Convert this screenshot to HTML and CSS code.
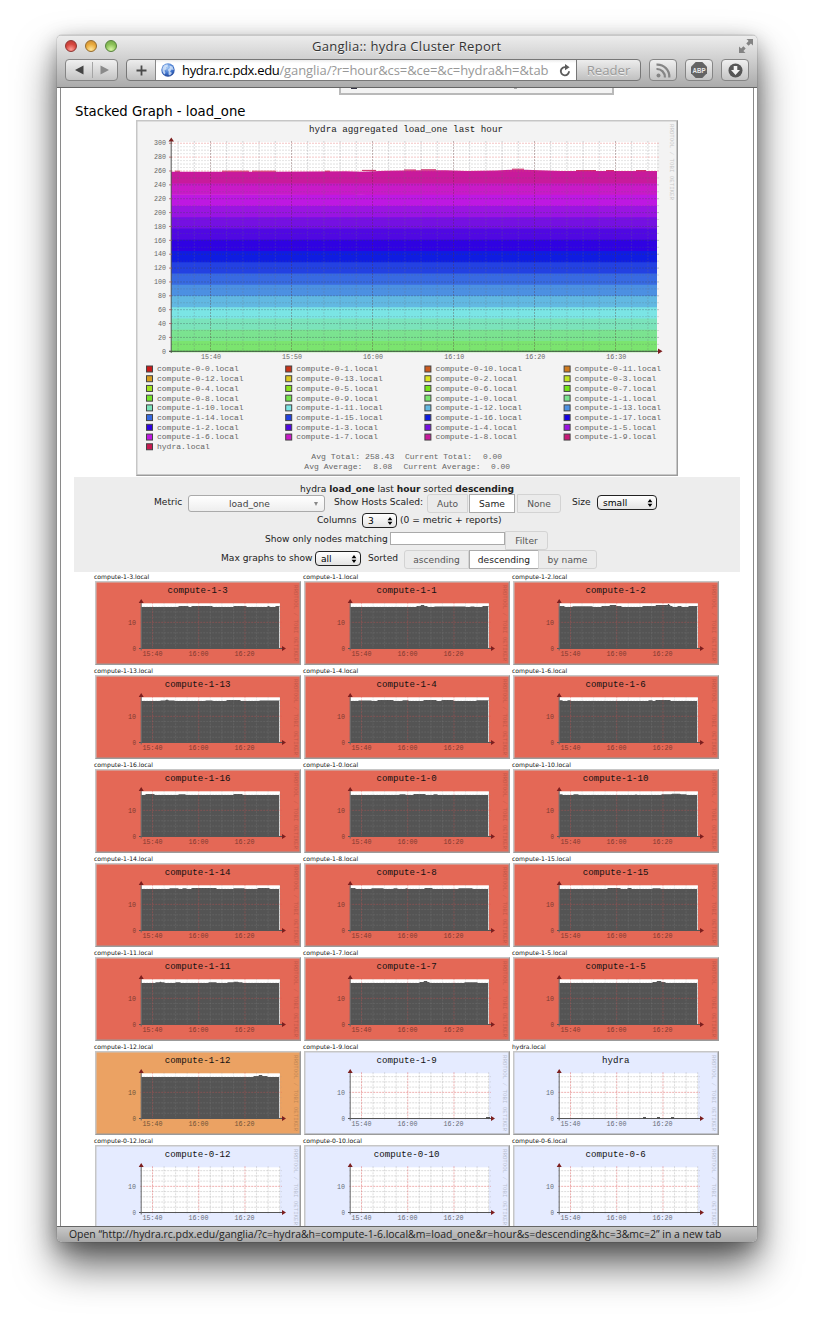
FILE: index.html
```html
<!DOCTYPE html>
<html lang="en">
<head>
<meta charset="utf-8">
<title>Ganglia:: hydra Cluster Report</title>
<link rel="stylesheet" href="styles.css">
</head>
<body>
<div class="window">
  <header class="chrome">
    <div class="titlebar">
      <div class="lights"><i class="light red"></i><i class="light amber"></i><i class="light green"></i></div>
      <div class="title">Ganglia:: hydra Cluster Report</div>
      <svg class="fullscreen" width="14" height="14" viewBox="0 0 14 14"><path d="M7.5 0H14V6.500L11.900 4.400L9.600 6.700L7.300 4.400L9.600 2.100ZM0 7.500L2.100 9.600L4.400 7.300L6.700 9.600L4.400 11.900L6.500 14H0Z" fill="#838383"/></svg>
    </div>
    <div class="toolbar">
      <div class="btn nav">
        <svg width="50" height="20" viewBox="0 0 50 20"><path d="M8 10L16.500 5.500V14.500Z" fill="#444"/><path d="M42 10L33.500 5.500V14.500Z" fill="#8a8a8a"/><path d="M25.500 2V18" stroke="#a5a5a5"/></svg>
      </div>
      <div class="address">
        <div class="plus"><svg width="11" height="11" viewBox="0 0 11 11"><path d="M5.500 .5V10.500M.5 5.500H10.500" stroke="#4a4a4a" stroke-width="1.800"/></svg></div>
        <div class="field">
          <svg class="globe" width="14" height="14" viewBox="0 0 14 14"><defs><radialGradient id="gl" cx=".45" cy=".3" r=".75"><stop offset="0" stop-color="#a9cdf8"/><stop offset=".6" stop-color="#3d72cb"/><stop offset="1" stop-color="#203f8d"/></radialGradient></defs><circle cx="7" cy="7" r="6.700" fill="url(#gl)"/><path d="M1.500 5Q3 1.500 6.500 1.600L7 3.200L5 4.300L5.600 6L3.500 7.500L4.500 10L3.500 11.500Q.8 9 1.500 5ZM8.500 2.500L11.500 3.500L12.800 7L10.500 6.400L9 8.500L11 10L9 12.500L7.500 11.500L7.700 8.500L6.900 6.800L8.800 5Z" fill="#e1eefc" opacity=".75"/></svg>
          <span class="url"><b>hydra.rc.pdx.edu</b>/ganglia/?r=hour&amp;cs=&amp;ce=&amp;c=hydra&amp;h=&amp;tab</span>
          <svg class="reload" width="12" height="13" viewBox="0 0 12 13"><path d="M7 3.300A4.100 4.100 0 1 0 10 7.200" fill="none" stroke="#5c5c5c" stroke-width="1.900"/><path d="M6 0L10.600 3.300L6 6.300Z" fill="#5c5c5c"/></svg>
        </div>
        <div class="reader">Reader</div>
      </div>
      <div class="btn tool"><svg width="15" height="15" viewBox="0 0 15 15"><g fill="none" stroke="#858585" stroke-width="2.200"><path d="M.5 1.600A12 12 0 0 1 13.300 14.500"/><path d="M.5 6A8 8 0 0 1 8.900 14.500"/></g><circle cx="2.500" cy="12.500" r="2" fill="#858585"/></svg></div>
      <div class="btn tool"><svg width="16" height="16" viewBox="0 0 16 16"><path d="M4.700 0H11.300L16 4.700V11.300L11.300 16H4.700L0 11.300V4.700Z" fill="#646464"/><text x="8" y="11" class="abp" textLength="13" lengthAdjust="spacingAndGlyphs">ABP</text></svg></div>
      <div class="btn tool"><svg width="15" height="15" viewBox="0 0 15 15"><circle cx="7.500" cy="7.500" r="7" fill="#565656"/><path d="M5.700 3H9.300V7H12L7.500 12L3 7H5.700Z" fill="#f2f2f2"/></svg></div>
    </div>
  </header>

  <main class="page">
    <div class="column">
      <div class="peek"><i class="speck"></i><i class="speck2"></i></div>
      <h1 class="heading">Stacked Graph - load_one</h1>
      <svg class="stacked" id="stacked" width="542" height="356" viewBox="0 0 542 356"></svg>

      <form class="controls">
        <p class="row summary"><span>hydra <b>load_one</b> last <b>hour</b> sorted <b>descending</b></span></p>
        <div class="row r-metric">
          <span class="lab w-metric">Metric</span>
          <div class="combo"><span>load_one</span><i></i></div>
          <span class="lab w-scaled">Show Hosts Scaled:</span>
          <div class="seg"><span class="w-auto">Auto</span><span class="on w-same">Same</span><span class="w-none">None</span></div>
          <span class="lab w-size">Size</span>
          <div class="pop p-size"><span>small</span><svg width="6" height="8" viewBox="0 0 7 10"><path d="M3.500 0L6.500 4H.5ZM3.500 10L6.500 6H.5Z"/></svg></div>
        </div>
        <div class="row r-columns">
          <span class="lab w-cols">Columns</span>
          <div class="pop p-cols"><span>3</span><svg width="6" height="8" viewBox="0 0 7 10"><path d="M3.500 0L6.500 4H.5ZM3.500 10L6.500 6H.5Z"/></svg></div>
          <span class="lab w-note">(0 = metric + reports)</span>
        </div>
        <div class="row r-filter">
          <span class="lab w-nodes">Show only nodes matching</span>
          <div class="input"></div>
          <div class="seg single"><span class="w-filter">Filter</span></div>
        </div>
        <div class="row r-sort">
          <span class="lab w-max">Max graphs to show</span>
          <div class="pop p-max"><span>all</span><svg width="6" height="8" viewBox="0 0 7 10"><path d="M3.500 0L6.500 4H.5ZM3.500 10L6.500 6H.5Z"/></svg></div>
          <span class="lab w-sorted">Sorted</span>
          <div class="seg"><span class="w-asc">ascending</span><span class="on w-desc">descending</span><span class="w-name">by name</span></div>
        </div>
      </form>

      <div class="hosts" id="hosts"></div>
    </div>
  </main>
  <footer class="status"><span>Open “http://hydra.rc.pdx.edu/ganglia/?c=hydra&amp;h=compute-1-6.local&amp;m=load_one&amp;r=hour&amp;s=descending&amp;hc=3&amp;mc=2” in a new tab</span></footer>
</div>
<script src="graphs.js"></script>
</body>
</html>
```
FILE: styles.css
```css
* { box-sizing: border-box; }
body {
  margin: 0;
  width: 814px;
  height: 1321px;
  overflow: hidden;
  background: #fff;
  font-family: "DejaVu Sans", sans-serif;
  color: #222;
}
.window {
  display: flex;
  flex-direction: column;
  width: 700px;
  height: 1207px;
  margin: 35px 0 0 57px;
  border-radius: 5px;
  background: #fff;
  box-shadow: 0 0 1px rgba(0,0,0,.7), 0 23px 40px rgba(0,0,0,.62), 0 6px 20px rgba(0,0,0,.28);
  overflow: hidden;
}
.chrome {
  flex: none;
  height: 53px;
  background: linear-gradient(#ececec, #d0d0d0 45%, #ababab);
  border-bottom: 1px solid #666;
  border-top: 1px solid #c8c8c8;
  font-family: "Open Sans", "Noto Sans", sans-serif;
}
.titlebar { display: flex; height: 23px; padding: 0 4px 0 8px; }
.lights { display: flex; gap: 8px; width: 247px; padding-top: 4px; }
.light { width: 12px; height: 12px; border-radius: 50%; border: 1px solid; }
.red { background: radial-gradient(circle at 50% 85%, #ff9f97, #d6473f 55%, #b93a36); border-color: #8d3431; }
.amber { background: radial-gradient(circle at 50% 85%, #ffe69a, #e9aa3c 55%, #c98a34); border-color: #936a2c; }
.green { background: radial-gradient(circle at 50% 85%, #d7f6a5, #8cc158 55%, #70a548); border-color: #55803a; }
.title { font-size: 13px; letter-spacing: .27px; line-height: 21px; color: #333; text-shadow: 0 1px 0 #f2f2f2; white-space: nowrap; flex: 1; }
.fullscreen { margin-top: 3px; }
.toolbar { display: flex; padding: 0 8px; height: 22px; }
.btn {
  display: flex; align-items: center; justify-content: center;
  flex: none;
  height: 22px;
  border: 1px solid #858585;
  border-radius: 4px;
  background: linear-gradient(#f0f0f0, #c4c4c4);
}
.nav { width: 53px; }
.tool { width: 28px; margin-left: 8px; }
.address {
  display: flex;
  flex: none;
  width: 515px;
  height: 22px;
  margin-left: 8px;
  border: 1px solid #777;
  border-radius: 4px;
  overflow: hidden;
  background: linear-gradient(#ededed, #c0c0c0);
}
.plus { display: flex; align-items: center; justify-content: center; width: 29px; border-right: 1px solid #888; }
.field { display: flex; align-items: center; width: 420px; padding-left: 5px; background: linear-gradient(#ececec, #fff 3px); }
.url { width: 372px; margin-left: 7px; font-size: 13px; letter-spacing: -.08px; line-height: 20px; color: #989898; white-space: nowrap; }
.url b { font-weight: 400; color: #000; letter-spacing: -.33px; }
.reload { margin-left: 5px; }
.reader { flex: 1; border-left: 1px solid #777; text-align: center; font-size: 13.2px; line-height: 20px; color: #9a9a9a; text-shadow: 0 1px 0 #eee; }
.abp { font: bold 8px "Liberation Sans", sans-serif; fill: #e8e8e8; text-anchor: middle; }

.page { flex: 1; min-height: 0; margin: 0 3px; border: 1px solid #8a8a8a; border-width: 0 1px; overflow: hidden; }
.column { width: 666px; margin-left: 13px; }
.peek { display: flex; justify-content: space-between; width: 275px; height: 7px; margin-left: 265px; padding: 0 95px 0 10px; border: solid #b9b9b9; border-width: 0 2px 2px; background: #f3f3f3; }
.speck { width: 6px; height: 1px; background: #334; }
.speck2 { width: 3px; height: 1px; background: #aaa; }
.heading { margin: 9px 0 0 1px; font-size: 13.25px; line-height: 16px; height: 16px; font-weight: 400; color: #000; white-space: nowrap; }
.stacked { display: block; margin-left: 62px; }

.controls { height: 95px; margin-top: 1px; background: #ededed; font-size: 9.1px; }
.row { display: flex; margin: 0; white-space: nowrap; }
.lab { flex: none; line-height: 12px; margin-top: 2px; }
.summary { height: 17px; padding: 6px 0 0 226px; line-height: 12px; }
.r-metric { height: 18px; padding-left: 80px; }
.w-metric { width: 34px; }
.combo { display: flex; justify-content: space-between; width: 137px; height: 17px; margin-top: 1px; border: 1px solid #aaa; border-radius: 3px; background: linear-gradient(#fff, #eee); color: #444; line-height: 16px; padding: 0 6px 0 40px; }
.combo i { margin-top: 6px; border: 2.5px solid transparent; border-top: 4px solid #888; height: 0; }
.w-scaled { width: 93px; margin-left: 9px; }
.seg { display: flex; height: 19px; color: #555; line-height: 18px; }
.seg span { border: 1px solid #d3d3d3; text-align: center; background: #ebebeb; }
.seg span:first-child { border-radius: 3px 0 0 3px; }
.seg span:last-child { border-radius: 0 3px 3px 0; }
.seg .on { background: #fff; border-color: #aaa; color: #222; }
.w-auto { width: 41px; margin-right: 1px; } .w-same { width: 46px; margin-right: 2px; } .w-none { width: 44px; }
.w-size { width: 25px; margin-left: 11px; }
.pop { display: flex; align-items: center; justify-content: space-between; height: 15px; margin-top: 1px; padding: 0 3px 0 5px; border: 1px solid #222; border-radius: 4px; background: linear-gradient(#fff, #e4e4e4); line-height: 12px; color: #000; }
.p-size { width: 60px; }
.r-columns { height: 19px; padding-left: 243px; }
.w-cols { width: 45px; } .p-cols { width: 35px; } .w-note { margin-left: 3px; }
.r-filter { height: 19px; padding-left: 191px; }
.w-nodes { width: 125px; }
.input { width: 115px; height: 13px; margin-top: 1px; border: 1px solid #aaa; background: #fff; }
.single { margin-top: 0; } .w-filter { width: 43px; }
.r-sort { padding-left: 147px; }
.w-max { width: 94px; } .p-max { width: 46px; } .w-sorted { margin-left: 7px; width: 36px; }
.w-asc { width: 65px; } .w-desc { width: 70px; } .w-name { width: 59px; margin-left: -1px; }

.hosts { display: grid; grid-template-columns: repeat(3, 209px); grid-auto-rows: 94px; margin-left: 20px; }
.host { display: flex; flex-direction: column; }
.host-name { height: 9px; line-height: 9px; font-size: 6.1px; color: #111; white-space: nowrap; }
.host svg { display: block; margin-left: 1px; }

.mono { font-family: "Liberation Mono", monospace; }

.status { flex: none; height: 16px; padding-left: 12px; border-top: 1px solid #666; background: linear-gradient(#c8c8c8, #a6a6a6); font: 10.45px/14px "Open Sans", "Noto Sans", sans-serif; color: #222; white-space: nowrap; }
```
FILE: graphs.js
```javascript
const text = (x, y, s, size, len, fill, extra = '') =>
  `<text class="mono" x="${x}" y="${y}" font-size="${size}" textLength="${len}" lengthAdjust="spacingAndGlyphs" fill="${fill}" xml:space="preserve" ${extra}>${s}</text>`;
const line = (x1, y1, x2, y2, stroke, dash = '2 1') =>
  `<path d="M${x1} ${y1}L${x2} ${y2}" stroke="${stroke}" stroke-dasharray="${dash}" fill="none"/>`;
const frame = (w, h, fill) =>
  `<rect width="${w}" height="${h}" fill="#9b9b9b"/><path d="M0 0H${w}L${w - 2} 2H2V${h - 2}L0 ${h}Z" fill="#c6c6c6"/><rect x="1.500" y="1.500" width="${w - 3}" height="${h - 3}" fill="${fill}"/>`;

function stackedGraph() {
  const L = 35, R = 521, B = 231.3, step = 13.87;
  const bands = ['#7be46f', '#7be390', '#7be3bb', '#7be5e5', '#62b8e2', '#4c90e2', '#386ae2', '#2341e2',
    '#0f1ce2', '#2f02e2', '#5008e2', '#7510e2', '#9a14e2', '#be18e2', '#c91ac8', '#c81a9c'];
  let s = frame(542, 356, '#f3f3f3');
  s += text(173, 12, 'hydra aggregated load_one last hour', 9.2, 194, '#222');
  s += `<rect x="${L}" y="22" width="${R - L}" height="${B - 22}" fill="#fff"/>`;
  const h = (B - 51.3) / 16;
  bands.forEach((c, i) => {
    const top = B - (i + 1) * h, k = i / 15;
    s += `<path d="M${L} ${top + .5 * k}H140L210 ${top}L225 ${top + .4 * k}L250 ${top - .6 * k}L285 ${top - 1.1 * k}H310L330 ${top - .2 * k}L360 ${top - .7 * k}L375 ${top - 1.6 * k}H390L425 ${top - .4 * k}H${R}V${top + h + 1}H${L}Z" fill="${c}"/>`;
  });
  [[39, 44, 51.2], [86, 113, 51.2], [116, 140, 51.2], [189, 194, 51.2], [226, 240, 50.4], [268, 280, 50], [285, 300, 49.8], [376, 388, 49.2], [440, 460, 50.6], [470, 478, 50.6], [500, 510, 50.6]]
    .forEach(([a, b, y]) => { s += line(a, y, b, y, '#c81a60', 'none'); });
  for (let v = 0; v <= 30; v++) {
    const y = B - v * step / 2, major = v % 2 === 0;
    s += line(L, y, R + 2, y, v > 25 ? (major ? 'rgba(220,90,90,.35)' : 'rgba(130,130,130,.25)') : (major ? 'rgba(60,70,80,.3)' : 'rgba(90,100,110,.2)'));
  }
  for (let i = 53; i < 60; i += 2) s += line(L, B - i * step / 4, R + 2, B - i * step / 4, 'rgba(130,130,130,.2)');
  for (let i = -2; i <= 27; i++) {
    const x = 74.5 + i * 16.2, major = i % 5 === 0;
    if (x < L || x > R) continue;
    s += line(x, 21, x, B, major ? 'rgba(90,50,50,.33)' : 'rgba(110,110,120,.25)');
  }
  for (let i = 0; i <= 15; i++) {
    const v = String(i * 20), w = v.length * 4;
    s += text(30 - w, B + 2.2 - i * step, v, 6.6, w, '#666');
    s += line(33, B - i * step, 36, B - i * step, '#c77', 'none');
  }
  ['15:40', '15:50', '16:00', '16:10', '16:20', '16:30'].forEach((t, i) => { s += text(65 + i * 81.05, 239, t, 6.6, 20, '#666'); });
  s += line(L + .2, 20, L + .2, 233, '#555', 'none') + line(33, B, 524, B, '#454', 'none');
  s += `<path d="M35.300 17.500L38 21.500H32.500ZM522 228.500L526.500 231.300L522 234Z" fill="#7c2020"/>`;

  const legend = [
    ['compute-0-0', '#c81a1a'], ['compute-0-1', '#c8341a'], ['compute-0-10', '#cc5a1e'], ['compute-0-11', '#d07b1f'],
    ['compute-0-12', '#d69e20'], ['compute-0-13', '#dcc820'], ['compute-0-2', '#dce421'], ['compute-0-3', '#c0e422'],
    ['compute-0-4', '#a0e41f'], ['compute-0-5', '#8ae41c'], ['compute-0-6', '#78e41a'], ['compute-0-7', '#74e41a'],
    ['compute-0-8', '#76e42a'], ['compute-0-9', '#76e44a'], ['compute-1-0', '#7be46f'], ['compute-1-1', '#7be390'],
    ['compute-1-10', '#7be3bb'], ['compute-1-11', '#7be5e5'], ['compute-1-12', '#62b8e2'], ['compute-1-13', '#4c90e2'],
    ['compute-1-14', '#386ae2'], ['compute-1-15', '#2341e2'], ['compute-1-16', '#0f1ce2'], ['compute-1-17', '#1802e2'],
    ['compute-1-2', '#2f02e2'], ['compute-1-3', '#5008e2'], ['compute-1-4', '#7510e2'], ['compute-1-5', '#9a14e2'],
    ['compute-1-6', '#be18e2'], ['compute-1-7', '#c91ac8'], ['compute-1-8', '#c81a9c'], ['compute-1-9', '#c81a78'],
    ['hydra', '#c81a50']];
  legend.forEach(([n, c], i) => {
    const x = 10.5 + (i % 4) * 139.2, y = 246 + Math.floor(i / 4) * 9.72, name = n + '.local';
    s += `<rect x="${x}" y="${y}" width="6" height="6" fill="${c}" stroke="#444" stroke-width="1"/>`;
    s += text(x + 10.5, y + 5.400, name, 8, name.length * 4.81, '#666');
  });
  s += text(175.300, 338.700, 'Avg Total: 258.43', 8, 83, '#666') + text(269, 338.700, 'Current Total:', 8, 67, '#666') + text(347, 338.700, '0.00', 8, 19, '#666');
  s += text(168.300, 348.500, 'Avg Average:', 8, 58, '#666') + text(237.300, 348.500, '8.08', 8, 19, '#666') + text(267.500, 348.500, 'Current Average:', 8, 77, '#666') + text(355, 348.500, '0.00', 8, 19, '#666');
  s += text(0, 0, 'RRDTOOL / TOBI OETIKER', 5.5, 76, '#c8c8c8', 'transform="translate(534 4) rotate(90)"');
  document.getElementById('stacked').innerHTML = s;
}

// Each host: name, background, and [start, end, height] bumps on top of the load (null when idle).
const RED = '#e46856', ORANGE = '#eba263', BLUE = '#e5ebff';
const hosts = [
  ['compute-1-3', RED, [[83, 94, 1], [96, 118, 1], [138, 152, 1], [172, 175, 1], [180, 185, 1]]],
  ['compute-1-1', RED, [[112, 124, 1], [116, 121, 2], [130, 162, .6], [166, 171, .6], [178, 185, 1]]],
  ['compute-1-2', RED, [[46, 52, 1], [59, 80, .8], [88, 109, 1], [96, 104, 2], [129, 160, 1], [142, 158, 2], [154, 157, 3], [164, 169, 1], [175, 185, 1]]],
  ['compute-1-13', RED, [[65, 80, .6], [70, 74, 1.2], [110, 118, .6], [131, 146, 1], [164, 185, .6]]],
  ['compute-1-4', RED, [[54, 68, .6], [73, 90, 1], [98, 105, .7], [119, 133, 1], [137, 150, 1], [172, 185, .7]]],
  ['compute-1-6', RED, [[46, 50, .8], [54, 58, .8], [135, 140, .8], [142, 158, 1]]],
  ['compute-1-16', RED, [[50, 60, 1], [83, 91, .7], [138, 148, .9]]],
  ['compute-1-0', RED, [[95, 102, .7], [109, 122, 1], [129, 134, .8]]],
  ['compute-1-10', RED, [[46, 50, .8], [60, 66, .8], [122, 124, .8], [148, 174, .8], [158, 168, 1.200]]],
  ['compute-1-14', RED, [[74, 84, .7], [87, 92, .8], [96, 122, .9], [138, 150, .8], [162, 175, .9]]],
  ['compute-1-8', RED, [[46, 52, 1], [67, 80, .8], [89, 94, .8], [101, 104, .8], [120, 129, 1], [154, 169, .7]]],
  ['compute-1-15', RED, [[94, 108, 1], [114, 119, 1], [139, 148, .7]]],
  ['compute-1-11', RED, [[60, 70, .8], [64, 67, 1.300], [80, 86, .8], [113, 122, .8], [132, 148, .8], [138, 144, 1.300]]],
  ['compute-1-7', RED, [[115, 126, 1], [119, 124, 2], [160, 174, .8]]],
  ['compute-1-5', RED, [[139, 153, 1], [143, 149, 2]]],
  ['compute-1-12', ORANGE, [[158, 173, 1], [163, 168, 2]]],
  ['compute-1-9', BLUE, null],
  ['hydra', BLUE, null],
  ['compute-0-12', BLUE, null],
  ['compute-0-10', BLUE, null],
  ['compute-0-6', BLUE, null]];

function hostGraph([name, bg, bumps]) {
  const L = 46.2, R = 185, B = 67.5, T = 22.300;
  const w = name.length * 5.48, dim = bg === RED ? '#7d3a30' : bg === ORANGE ? '#6e5238' : '#666b77';
  const grey = bumps ? 'rgba(150,150,150,.2)' : 'rgba(150,150,150,.33)';
  const rose = bumps ? 'rgba(220,80,80,.32)' : 'rgba(220,80,80,.45)';
  let s = frame(206, 84, bg) + text(102.700 - w / 2, 12.300, name, 9.200, w, '#111');
  s += `<rect x="${L}" y="${T}" width="${R - L}" height="${B - T}" fill="#fff"/>`;
  if (bumps) {
    s += `<rect x="${L}" y="26" width="${R - L - .8}" height="${B - 26}" fill="#545454"/>`;
    bumps.forEach(([a, b, h]) => { s += `<path d="M${a} 26L${a + 1} ${26 - h}H${b - 1}L${b} 26Z" fill="#545454"/>`; });
  }
  for (let i = 1; i <= 8; i++) {
    const y = B - i * 5.230;
    s += line(L - 1, y, R + 2, y, i === 5 ? rose : grey);
  }
  for (let i = 0; i <= 11; i++) {
    const x = 57.500 + i * 11.560;
    s += line(x, T - 1, x, B + 1, i % 4 === 0 ? rose : grey);
  }
  s += line(44, B, 188, B, '#555', 'none') + line(L, 21, L, B + 2, '#666', 'none');
  if (name === 'hydra') s += '<path d="M130 66.700h3M144 66.700h3M158 66.700h3" stroke="#333"/>';
  if (name === 'compute-1-9') s += '<path d="M182 66.700h4" stroke="#333"/>';
  s += `<path d="M46.200 18L48.700 22H43.700ZM187 65L191 67.500L187 70Z" fill="#7c1e1e"/>`;
  s += text(33, 43.500, '10', 6.600, 8, dim) + text(37.500, 69.700, '0', 6.600, 3.500, dim);
  ['15:40', '16:00', '16:20'].forEach((t, i) => { s += text(47.500 + i * 46, 75.200, t, 6.600, 20, dim); });
  s += text(0, 0, 'RRDTOOL / TOBI OETIKER', 5.5, 76, dim, 'opacity=".35" transform="translate(198.500 4) rotate(90)"');
  return `<div class="host"><span class="host-name">${name}.local</span><svg width="206" height="84" viewBox="0 0 206 84">${s}</svg></div>`;
}

stackedGraph();
document.getElementById('hosts').innerHTML = hosts.map(hostGraph).join('');
```
